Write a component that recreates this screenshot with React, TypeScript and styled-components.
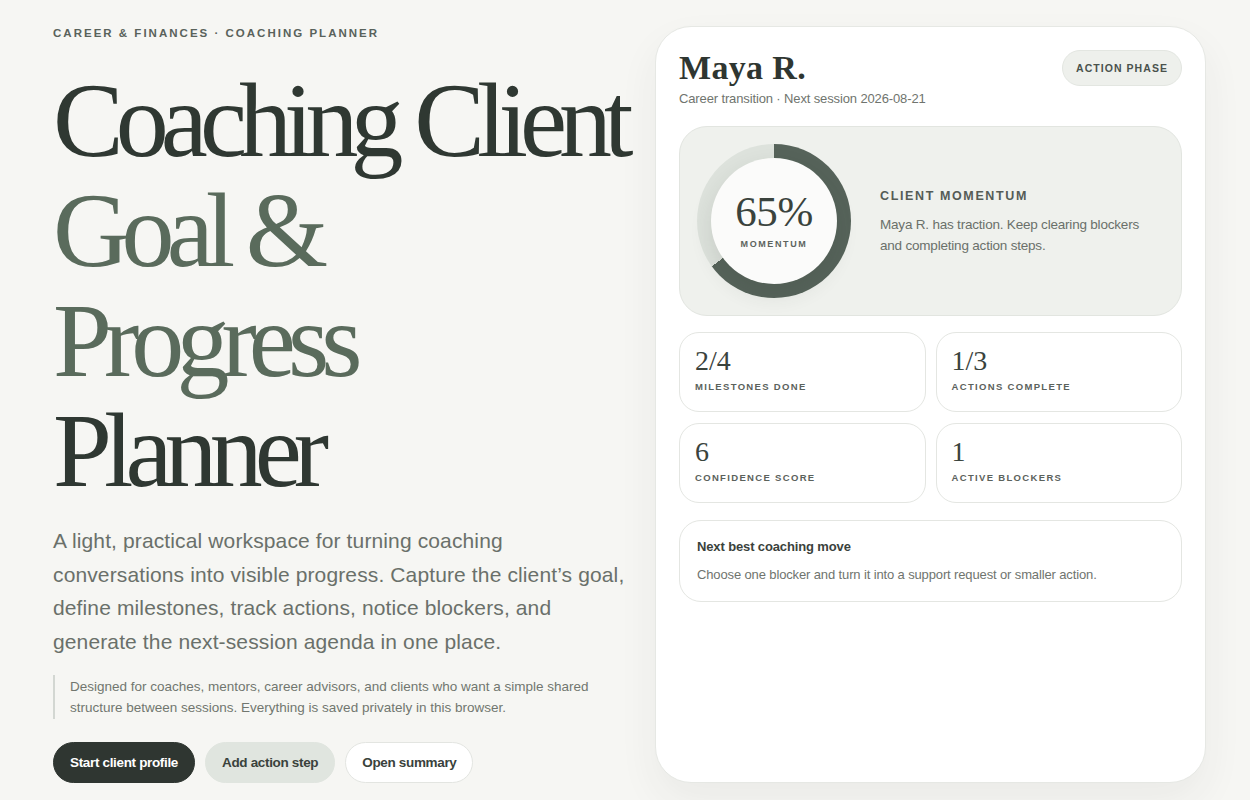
import React from "react";
import styled, { createGlobalStyle } from "styled-components";

const GlobalStyle = createGlobalStyle`
  html, body {
    margin: 0;
    padding: 0;
    background: #f6f6f3;
  }
  body {
    font-family: "Liberation Sans", Arial, sans-serif;
    color: #2f3631;
  }
  * {
    box-sizing: border-box;
  }
`;

const SERIF = `"Liberation Serif", "DejaVu Serif", serif`;
const SANS = `"Liberation Sans", Arial, sans-serif`;

const Page = styled.div`
  display: grid;
  grid-template-columns: 1fr 551px;
  gap: 25px;
  padding: 26px 44px 17px 53px;
  min-height: 800px;
`;

const Intro = styled.section`
  display: flex;
  flex-direction: column;
  padding-top: 1px;
`;

const Eyebrow = styled.div`
  font-family: ${SANS};
  font-size: 11.5px;
  font-weight: 700;
  letter-spacing: 0.175em;
  color: #59625b;
  text-transform: uppercase;
`;

const Title = styled.h1`
  margin: 27px 0 0;
  font-family: ${SERIF};
  font-weight: 400;
  font-size: 106px;
  line-height: 110px;
  letter-spacing: -0.075em;
  color: #2f3832;
  white-space: nowrap;
`;

const TitleLine = styled.span<{ $accent?: boolean }>`
  display: block;
  color: ${(p) => (p.$accent ? "#5a6b5c" : "#2f3832")};
`;

const Lead = styled.p`
  margin: 18px 0 0;
  font-family: ${SANS};
  font-size: 21px;
  line-height: 33.5px;
  letter-spacing: 0.006em;
  color: #6a706a;
  max-width: 580px;
`;

const Note = styled.blockquote`
  margin: 17px 0 0;
  padding: 1px 0 1px 15px;
  border-left: 2px solid #d3d7d2;
  font-family: ${SANS};
  font-size: 13.5px;
  line-height: 21px;
  letter-spacing: 0;
  color: #71766f;
  max-width: 545px;
`;

const Actions = styled.div`
  display: flex;
  gap: 10px;
  margin-top: 23px;
`;

const Button = styled.button<{ $variant: "primary" | "soft" | "outline" }>`
  height: 41px;
  padding: 0 16px;
  border-radius: 21px;
  font-family: ${SANS};
  font-size: 13.5px;
  font-weight: 700;
  letter-spacing: -0.025em;
  cursor: pointer;
  border: 1px solid
    ${(p) =>
      p.$variant === "primary"
        ? "#2f3631"
        : p.$variant === "soft"
        ? "#e0e5df"
        : "#e3e5e1"};
  background: ${(p) =>
    p.$variant === "primary"
      ? "#2f3631"
      : p.$variant === "soft"
      ? "#e0e5df"
      : "#ffffff"};
  color: ${(p) => (p.$variant === "primary" ? "#ffffff" : "#3a423c")};
`;

const Card = styled.aside`
  background: #ffffff;
  border: 1px solid #e6e8e4;
  border-radius: 36px;
  padding: 22px 23px 24px;
  box-shadow: 0 18px 40px rgba(47, 54, 49, 0.06);
  display: flex;
  flex-direction: column;
`;

const CardHeader = styled.div`
  display: flex;
  justify-content: space-between;
  align-items: flex-start;
`;

const Name = styled.h2`
  margin: 0;
  font-family: ${SERIF};
  font-size: 34px;
  line-height: 38px;
  font-weight: 700;
  letter-spacing: 0.01em;
  color: #2f3631;
`;

const Subline = styled.div`
  margin-top: 4px;
  font-family: ${SANS};
  font-size: 13px;
  letter-spacing: -0.01em;
  color: #6f746e;
`;

const Badge = styled.div`
  margin-top: 1px;
  height: 36px;
  padding: 0 13px;
  display: flex;
  align-items: center;
  border-radius: 18px;
  background: #eef0ec;
  border: 1px solid #e3e6e1;
  font-family: ${SANS};
  font-size: 10.5px;
  font-weight: 700;
  letter-spacing: 0.1em;
  color: #4a524c;
`;

const MomentumPanel = styled.div`
  margin-top: 20px;
  display: flex;
  align-items: center;
  gap: 29px;
  padding: 17px;
  border-radius: 28px;
  background: #eff1ed;
  border: 1px solid #e2e5e0;
`;

const Ring = styled.div<{ $value: number }>`
  flex: 0 0 154px;
  width: 154px;
  height: 154px;
  border-radius: 50%;
  background: conic-gradient(
    #56635a 0 ${(p) => p.$value}%,
    #dde2dc ${(p) => p.$value}% 100%
  );
  display: flex;
  align-items: center;
  justify-content: center;
`;

const RingCore = styled.div`
  width: 126px;
  height: 126px;
  border-radius: 50%;
  background: #fbfbfa;
  box-shadow: 0 10px 22px rgba(47, 54, 49, 0.12);
  display: flex;
  flex-direction: column;
  align-items: center;
  justify-content: center;
  padding-bottom: 4px;
`;

const RingValue = styled.div`
  font-family: ${SERIF};
  font-size: 43px;
  line-height: 44px;
  color: #3a433d;
  letter-spacing: -0.01em;
`;

const RingLabel = styled.div`
  margin-top: 5px;
  font-family: ${SANS};
  font-size: 9px;
  font-weight: 700;
  letter-spacing: 0.18em;
  color: #5d645e;
`;

const MomentumText = styled.div`
  display: flex;
  flex-direction: column;
  padding-top: 2px;
`;

const MomentumTitle = styled.div`
  font-family: ${SANS};
  font-size: 12.5px;
  font-weight: 700;
  letter-spacing: 0.13em;
  color: #555c56;
`;

const MomentumBody = styled.div`
  margin-top: 11px;
  font-family: ${SANS};
  font-size: 13.5px;
  line-height: 21px;
  letter-spacing: -0.015em;
  color: #6a706a;
  max-width: 280px;
`;

const StatGrid = styled.div`
  margin-top: 16px;
  display: grid;
  grid-template-columns: 1fr 1fr;
  gap: 11px 10px;
`;

const Stat = styled.div`
  height: 80px;
  padding: 12px 15px;
  border-radius: 20px;
  border: 1px solid #e4e6e2;
  background: #ffffff;
`;

const StatValue = styled.div`
  font-family: ${SERIF};
  font-size: 28px;
  line-height: 32px;
  color: #3a433d;
`;

const StatLabel = styled.div`
  margin-top: 4px;
  font-family: ${SANS};
  font-size: 9.5px;
  font-weight: 700;
  letter-spacing: 0.14em;
  color: #5b625c;
  text-transform: uppercase;
`;

const NextMove = styled.div`
  margin-top: 17px;
  padding: 18px 17px 19px;
  border-radius: 22px;
  border: 1px solid #e4e6e2;
`;

const NextTitle = styled.div`
  font-family: ${SANS};
  font-size: 13px;
  font-weight: 700;
  letter-spacing: -0.01em;
  color: #3a423c;
`;

const NextBody = styled.div`
  margin-top: 13px;
  font-family: ${SANS};
  font-size: 13px;
  letter-spacing: -0.01em;
  color: #6f746e;
`;

const stats = [
  { value: "2/4", label: "Milestones done" },
  { value: "1/3", label: "Actions complete" },
  { value: "6", label: "Confidence score" },
  { value: "1", label: "Active blockers" },
];

export default function App() {
  const momentum = 65;
  return (
    <>
      <GlobalStyle />
      <Page>
        <Intro>
          <Eyebrow>Career &amp; Finances · Coaching Planner</Eyebrow>
          <Title>
            <TitleLine>Coaching Client</TitleLine>
            <TitleLine $accent>Goal &amp;</TitleLine>
            <TitleLine $accent>Progress</TitleLine>
            <TitleLine>Planner</TitleLine>
          </Title>
          <Lead>
            A light, practical workspace for turning coaching conversations
            into visible progress. Capture the client’s goal, define
            milestones, track actions, notice blockers, and generate the
            next-session agenda in one place.
          </Lead>
          <Note>
            Designed for coaches, mentors, career advisors, and clients who
            want a simple shared structure between sessions. Everything is
            saved privately in this browser.
          </Note>
          <Actions>
            <Button $variant="primary">Start client profile</Button>
            <Button $variant="soft">Add action step</Button>
            <Button $variant="outline">Open summary</Button>
          </Actions>
        </Intro>

        <Card>
          <CardHeader>
            <div>
              <Name>Maya R.</Name>
              <Subline>Career transition · Next session 2026-08-21</Subline>
            </div>
            <Badge>ACTION PHASE</Badge>
          </CardHeader>

          <MomentumPanel>
            <Ring $value={momentum}>
              <RingCore>
                <RingValue>{momentum}%</RingValue>
                <RingLabel>MOMENTUM</RingLabel>
              </RingCore>
            </Ring>
            <MomentumText>
              <MomentumTitle>CLIENT MOMENTUM</MomentumTitle>
              <MomentumBody>
                Maya R. has traction. Keep clearing blockers and completing
                action steps.
              </MomentumBody>
            </MomentumText>
          </MomentumPanel>

          <StatGrid>
            {stats.map((s) => (
              <Stat key={s.label}>
                <StatValue>{s.value}</StatValue>
                <StatLabel>{s.label}</StatLabel>
              </Stat>
            ))}
          </StatGrid>

          <NextMove>
            <NextTitle>Next best coaching move</NextTitle>
            <NextBody>
              Choose one blocker and turn it into a support request or smaller
              action.
            </NextBody>
          </NextMove>
        </Card>
      </Page>
    </>
  );
}
